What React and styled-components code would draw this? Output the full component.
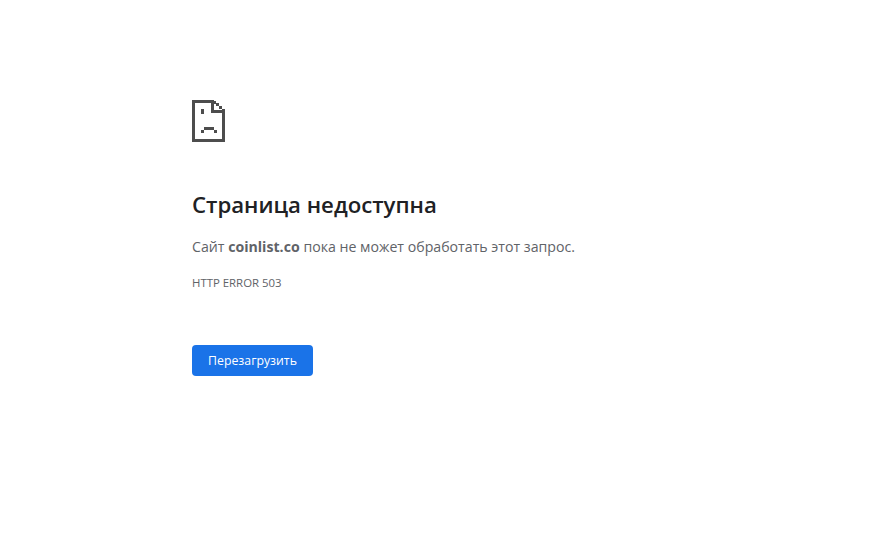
import React from 'react';
import styled, { createGlobalStyle } from 'styled-components';

const GlobalStyle = createGlobalStyle`
  html, body {
    margin: 0;
    background: #fff;
  }
  body {
    font-family: "Open Sans", "Noto Sans", sans-serif;
    color: #5f6368;
  }
`

const Page = styled.main`
  box-sizing: border-box;
  width: 882px;
  height: 560px;
  padding: 100px 0 0 192px;
`

const Icon = styled.svg`
  display: block;
  width: 33px;
  height: 42px;
  shape-rendering: crispEdges;
`

const Heading = styled.h1`
  margin: 47px 0 0;
  font-size: 22.2px;
  line-height: 32px;
  font-weight: 600;
  color: #202124;
`

const Message = styled.p`
  margin: 16px 0 0;
  font-size: 14.17px;
  line-height: 20px;
  color: #5f6368;
  strong {
    font-weight: 700;
  }
`

const ErrorCode = styled.div`
  margin-top: 18px;
  font-size: 11.4px;
  line-height: 16px;
  color: #5f6368;
`

const ReloadButton = styled.button`
  display: block;
  margin-top: 54px;
  width: 121px;
  height: 31px;
  padding: 0;
  border: none;
  border-radius: 4px;
  background: #1a73e8;
  color: #fff;
  font-family: inherit;
  font-size: 12.3px;
  font-weight: 500;
`

const SadPage = () => (
  <Icon viewBox="0 0 33 42" fill="#4d4d4d">
    <path d="M0 0h21v3H3v36h27V12h3v30H0z" />
    <path d="M19 0h3v10h11v3H19z" />
    <path d="M22 1h2v3h-2zM24 3h3v3h-3zM27 6h3v3h-3zM30 9h3v3h-3z" />
    <path d="M9 9h3v5H9z" />
    <path d="M12 27h10v3H12zM9 30h3v3H9zM22 30h3v3h-3z" />
  </Icon>
)

export default function App() {
  return (
    <Page>
      <GlobalStyle />
      <SadPage />
      <Heading>Страница недоступна</Heading>
      <Message>Сайт <strong>coinlist.co</strong> пока не может обработать этот запрос.</Message>
      <ErrorCode>HTTP ERROR 503</ErrorCode>
      <ReloadButton>Перезагрузить</ReloadButton>
    </Page>
  )
}
